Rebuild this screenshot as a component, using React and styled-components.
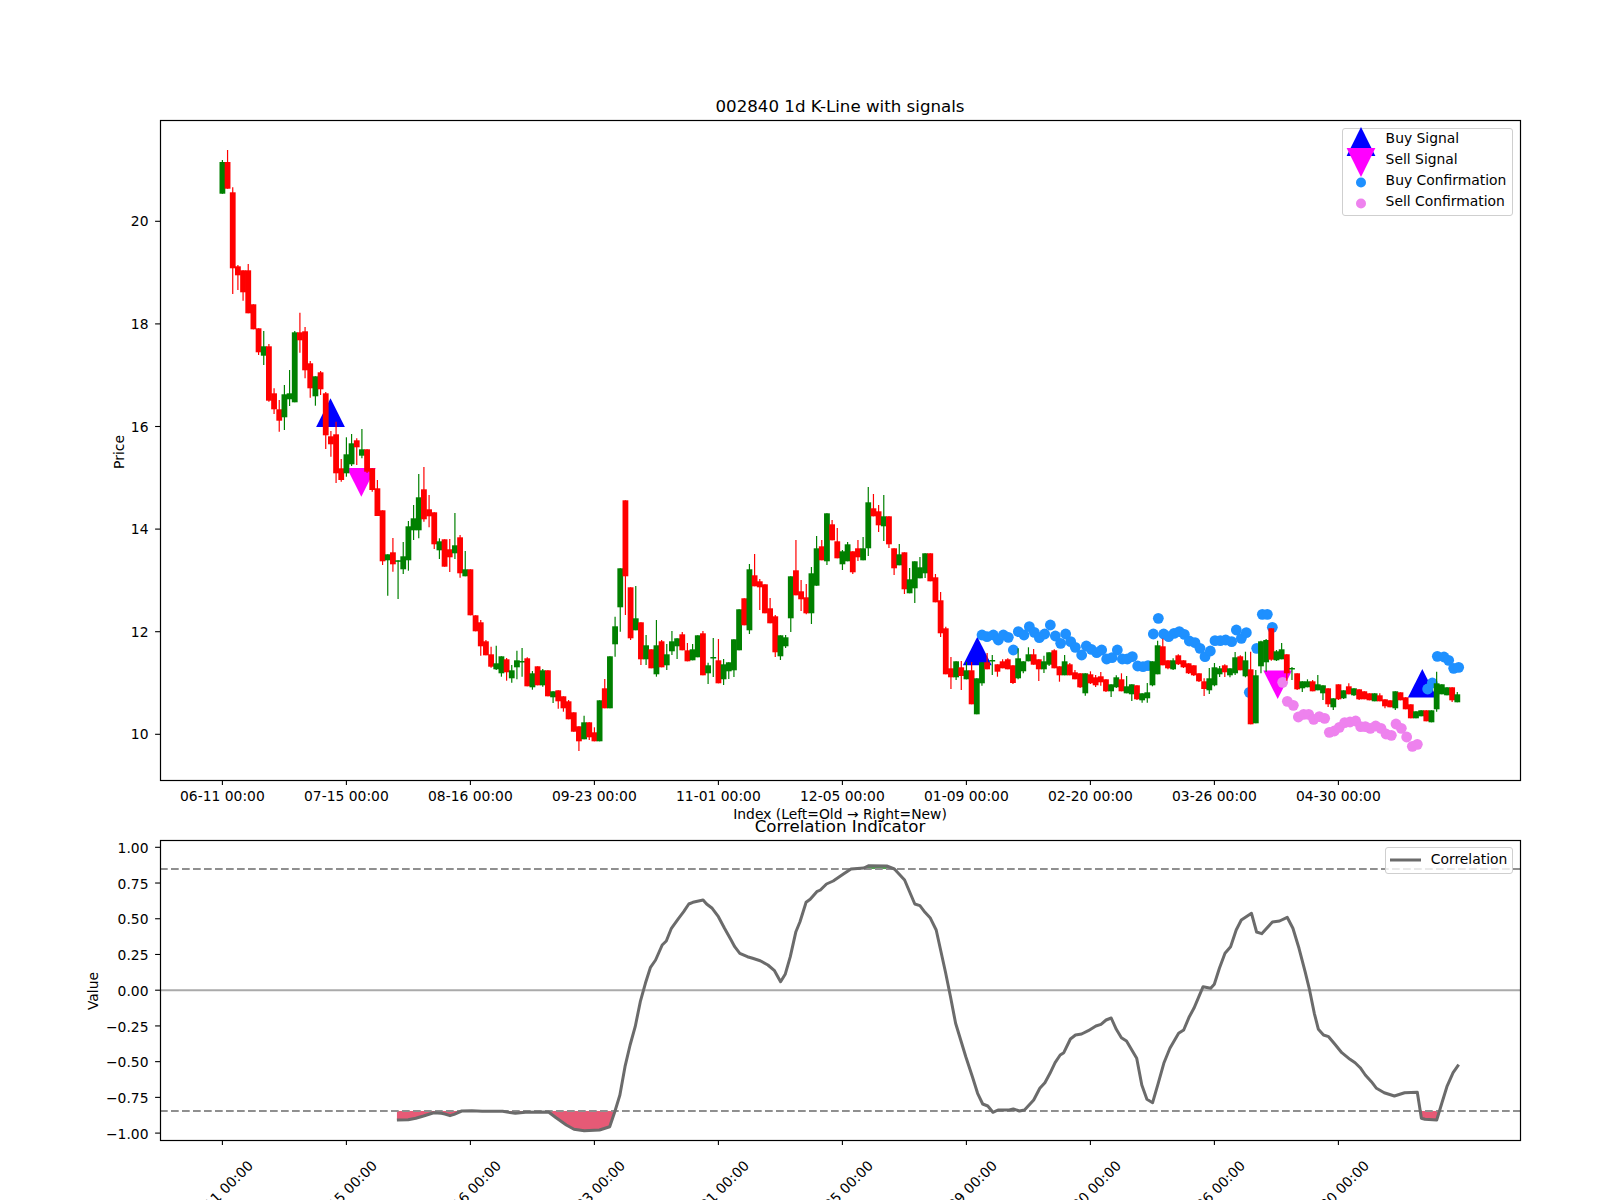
import React from 'react';
import styled, { createGlobalStyle } from 'styled-components';

const GlobalStyle = createGlobalStyle`
  html, body { margin: 0; padding: 0; background: #fff; }
`;

const Figure = styled.div`
  width: 1600px;
  height: 1200px;
  background: #fff;
  overflow: hidden;
  display: flex;
  flex-direction: column;
  font-family: "DejaVu Sans", sans-serif;
`;

const Panel = styled.section`
  position: relative;
  height: ${p => p.$height}px;
  flex: none;
`;

const Plot = styled.svg`
  display: block;
  width: 1600px;
  height: 100%;
  overflow: visible;
`;

const Frame = styled.rect`
  fill: none;
  stroke: #000;
  stroke-width: 1.2;
`;

const Tick = styled.line`
  stroke: #000;
  stroke-width: 1.1;
`;

const Label = styled.text`
  font-family: "DejaVu Sans", sans-serif;
  font-size: ${p => p.$size || 13.89}px;
  fill: #000;
  text-anchor: ${p => p.$anchor || 'middle'};
`;

const Guide = styled.line`
  stroke: ${p => (p.$solid ? '#aaaaaa' : '#8f8f8f')};
  stroke-width: 2.1;
  stroke-dasharray: ${p => (p.$solid ? 'none' : '7.7 3.3')};
`;

const CorrLine = styled.polyline`
  fill: none;
  stroke: #6b6b6b;
  stroke-width: 3;
  stroke-linejoin: round;
`;

const Legend = styled.div`
  position: absolute;
  top: ${p => p.$top}px;
  right: 86.7px;
  box-sizing: border-box;
  padding: ${p => p.$pad};
  background: rgba(255, 255, 255, 0.8);
  border: 1px solid #cfcfcf;
  border-radius: 3px;
  display: flex;
  flex-direction: column;
`;

const LegendRow = styled.div`
  height: ${p => p.$h || 21}px;
  display: flex;
  align-items: center;
  gap: ${p => p.$gap || 9}px;
  font-size: 13.89px;
  line-height: 1;
  color: #000;
  white-space: nowrap;
`;

const LegendKey = styled.svg`
  width: 34px;
  height: 21px;
  flex: none;
  overflow: visible;
`;

// traced candles: [up?, bodyTop, bodyBottom, wickTop, wickBottom]
const g = 1, r = 0;
const candles = [
  [g,162,193.7,160,193.7],[r,162,188.7,150,188.7],[r,192.3,268.3,187.3,294],[r,266.3,275.3,265,290],[r,270.3,292.3,270.3,300.7],
  [r,270.3,313.3,264,313.3],[r,304.3,329.3],[r,328.3,352.3,328.3,355],[g,346.3,355.7,331,365],[r,346.3,400.7,344,401.7],
  [r,393.3,409.3,388.3,414],[r,409.3,420.7,400,431.7],[g,394.3,417.3,385,430],[g,393.3,399.3,370,406],[g,332.3,402.3,331,402.3],
  [r,332.3,340.3,312.7,352.7],[r,331.3,370.3,327,378.3],[r,363.3,388.3,361,397.7],[g,376.3,396.3,376.3,405.7],[r,372.3,389.3,371,395],
  [r,393.3,435.3,392,449],[r,436.3,444.3,431,456.7],[r,434.3,473.3,421.7,483],[r,468.3,480,459,481.7],[g,454.3,473.3,437.3,476.7],
  [g,443.3,464.3,434,466],[r,440.3,447.3,438.3,465],[g,449.3,455.7,429,458.3],[r,449.3,471.7,449.3,473],[r,468.3,490,468.3,491.7],
  [r,488.3,516,480,516],[r,510.3,561.3,510.3,565],[g,554.3,560.3,554.3,595.7],[r,552.3,564.3,538,571.7],[g,560.3,561.8,560.3,599],
  [g,556.3,569.3,542,574],[g,526.3,560.3,521,570.7],[g,518.3,530.3,505,540],[g,497.3,530.3,474,538.3],[r,489.3,519.3,467,521.7],
  [r,509.3,516.3,495,527.3],[r,512.3,544.3,512.3,549],[g,541.3,550.3,538.3,559],[r,539.3,566.7],[r,549.3,557.3,539,572],
  [g,545.3,553.3,513,559],[r,537.3,573.3,535,577.7],[g,569.3,576.3,551,576.3],[r,569.3,615.3],[r,615.3,631.3],
  [r,622.3,646.3,620,655.7],[r,641.3,655.3,640,655.3],[r,654.3,666.7,646.7,667.7],[g,663.3,669.3,645.7,670],[g,656.3,673.3,656.3,676.7],
  [r,659.3,672.3,658,680.7],[g,670.3,678.3,665,682.7],[g,660.3,667.3,650.7,679.3],[g,661,662.5,648,676.7],[r,658.3,686.3,657.3,686.3],
  [g,673.3,687.3,671,689.7],[r,666.3,685.3],[g,670.3,685.3,669,686.7],[r,670.3,696.3],[g,691.3,697.3,691.3,703],
  [r,690.3,701.3,690.3,708.7],[r,696.3,708.3,696.3,711.7],[r,701.3,719.3,700,719.3],[r,712.3,731.7],[r,726.3,741.3,726.3,751],
  [g,722.3,739.3,715.7,739.3],[r,722.3,737.3,722.3,740],[r,732.3,741.3,727.3,741.3],[g,700.3,741.3],[r,688.3,708.3,679,708.3],
  [g,656.3,708.3],[g,626.3,644.3,616.7,656.7],[g,568.3,607.3,568.3,631.7],[r,500.3,576.3,500.3,615],[r,587.3,638.3,587.3,640],
  [g,618.3,630.3,586,630.3],[r,622.3,659.3,622.3,665],[g,645.3,659.3,635,665],[r,649.3,668.3],[g,645.3,674.3,620,676.7],
  [r,641.3,667.3,640,667.3],[g,654.3,665.3,644,670],[g,641.3,651.3,631,655],[g,638.3,646.3,638.3,659],[r,634.3,650.3,632,650.3],
  [r,650.3,661.3,643,661.3],[g,649.3,660.3,644,660.3],[g,635.3,657.3],[r,633.3,675.3,631,675.3],[g,665.3,673.3,662.7,684],
  [g,657,658.5,638,677],[r,660.3,683.3,639,683.3],[g,664.3,679.3,659,685],[g,662.3,671.3,662.3,679],[g,639.3,670.3,639.3,677],
  [g,609.3,650.3],[r,598.3,625.3],[g,569.3,630.3,564,634],[r,575.3,586.3,554,586.3],[r,581.3,587.3,579,610],
  [r,584.3,613.3],[r,608.3,623.3,598,623.3],[r,616.3,652.3,615,657],[g,635.3,656.3,635.3,660],[g,637.3,646.3,635,648],
  [g,576.3,618.3,576.3,632],[r,570.3,595.3,540,595.3],[r,591.3,599.3,580,611],[r,597.3,613.3,584,614.3],[g,573.3,613.3,567,624],
  [g,548.3,585.7,536,585.7],[r,546.3,560.3,540,560.3],[g,513.3,561.3,513.3,565],[r,524.3,540.3,520,540.3],[r,541.3,558.3,528,558.3],
  [g,551.3,564.3,550,570],[g,544.3,561.3,542,561.3],[r,551.3,572.3,551.3,574],[r,548.3,557.3,540,561],[g,548.3,560.3,537,560.3],
  [g,502.3,548.3,487,556],[r,508.3,516.3,494,516.3],[r,511.3,525.3,505,532],[g,516.3,526.3,495,541],[r,516.3,544.3,516.3,548],
  [r,548.3,568.3,548.3,575],[g,554.3,565.3,544,565.3],[r,552.3,589.3,552.3,594],[g,579.3,593.3,568,593.3],[g,561.3,588.3,561.3,603],
  [g,567.3,578.3,557,578.3],[g,553.3,573.3,553.3,578],[r,553.3,581.3],[r,577.3,602.3,574,602.3],[r,600.3,633.3,592,637],
  [r,628.3,674.3,626.7,674.3],[r,668.3,677.3,657,689],[g,661.3,677.3,661.3,680],[r,667.3,676,661,690],[g,670.3,679.3,662,679.3],
  [r,670.3,704.3,662,704.3],[g,678.3,714.3],[g,662.3,683.3,662.3,685.7],[r,662.3,669.3,653,669.3],[g,660,661.5,655,675],
  [r,664.3,671.7,664.3,676.7],[r,661.3,668.3,659.3,668.3],[r,659.3,669.3,658.3,669.3],[r,665.3,683,665.3,684],[g,658.3,678.3,648.3,679.3],
  [g,661.3,671.3,661.3,673.3],[g,654.3,661.3,647.3,661.3],[r,654.3,664.7,649,664.7],[r,659.3,669.3,659.3,681],[g,661.3,669.3,655.7,673],
  [g,652.3,664.7,652.3,666],[r,650.3,668.3,649.3,668.3],[r,666.3,675.3,666.3,681.7],[g,661.3,675.3,655,675.3],[r,664.3,675.3,663,675.3],
  [r,672.3,679.3,670,679.3],[r,673.3,687.3,673.3,688],[g,673.3,693.3,673.3,695.7],[r,674.3,683.3,671.3,684],[r,677.3,685.3,675,687],
  [r,676.3,682.3,672,685.7],[r,679.3,691.3,679.3,692],[g,684.3,691.3,684.3,697],[g,677.3,687.3,675.3,688],[r,679.3,691.3,673.3,691.3],
  [g,686.3,693.3,676,693.3],[g,684.3,694.3,684.3,701],[r,685.3,699.3,685.3,700],[g,693.3,700.3,693.3,702.7],[g,692.3,698.3,683,702.7],
  [g,661.3,685.3,661.3,686.3],[g,645.3,674.3,640.7,674.3],[r,646.3,665.3,638.7,665.3],[r,660.3,668.3,660.3,669.3],[g,660.3,669.3,658.3,670],
  [r,655.3,664.3,654.3,665],[r,660.3,667.3,660.3,668],[r,663.3,673.3,663.3,674],[r,665.3,675.3,665.3,676],[r,673.3,681.3,673.3,682],
  [r,681.3,689,678.3,696],[g,678.3,690.3,668,694],[g,667.3,685.3,663,686.3],[g,668.3,674.3,666,677],[r,665.3,672.3,664.3,677],
  [g,668.3,675.3,668.3,677.3],[g,657.3,673.3,652,675],[r,656.3,670.3,655.3,670.3],[g,660.3,676.3,651.7,677.3],[r,669.3,724.3,651.7,724.3],
  [g,675.3,723.3,670,723.3],[g,641.3,666.3,640.7,673.3],[g,640,662.3,639,671.7],[r,628.3,659.7,628.3,660.7],[g,651.3,660.3,650,661],
  [g,649.3,659.3,643,659.3],[r,654.3,673.3,654.3,680.7],[g,668,669.5,667,680],[r,673.3,689.3,673.3,690],[g,681.3,688.3,681.3,692],
  [g,681.3,687.3,679.3,687.3],[r,681.3,691.3,680,691.3],[g,684.3,690.3,675,690.3],[g,685.3,693.3,685.3,700],[r,688.3,704.3,688.3,707],
  [g,698.3,707.3,698.3,710],[r,684.3,699.3,684.3,700],[g,690.3,698.3,690.3,699],[r,686.3,694.3,683.3,694.3],[g,688.3,695.3,688.3,696],
  [r,689.3,699.3,689.3,700],[r,691.3,699.3],[r,693.3,700.3],[g,693.3,701.3],[r,695.3,701.3,693.3,701.3],
  [r,699.3,706.3,699.3,708.3],[r,700.3,707.3],[g,691.3,708.3,691.3,710],[r,692.3,700.3],[r,697.3,709.3],
  [r,704.3,718.3],[g,711.3,718.3],[g,710.3,716.3],[r,710.3,721.3],[g,710.3,722.3],
  [g,683.3,709.3,671.7,711.7],[g,684.3,694.3],[g,687.3,695.3],[r,687.3,700.3,687.3,702],[g,694.3,702.3,692,702.3],
];

const candleX = i => 222.4 + 5.167 * i;

// confirmation dots, traced in two 3x crops of the price panel
const fromA = ([x, y]) => [950 + x / 3, 590 + y / 3];
const fromB = ([x, y]) => [1210 + x / 3, 590 + y / 3];

const buyDots = [
  ...[[96,135],[111,140],[130,135],[145,150],[160,135],[175,142],[190,180],[205,125],[222,135],[238,110],[253,127],[268,143],[284,132],[301,105],[316,138],[332,160],[347,132],[362,155],[376,172],[395,195],[409,168],[424,178],[440,188],[455,180],[470,207],[486,203],[502,180],[517,207],[532,207],[547,200],[563,228],[579,230],[594,227],[610,132],[625,85],[641,132],[656,140],[672,130],[688,125],[703,133],[718,153],[735,158],[750,175],[765,200],[781,183],[795,152],[811,152],[827,150],[845,155],[859,120],[874,145],[889,128]].map(fromA),
  ...[[118,307],[140,175],[157,73],[172,73],[187,112],[653,297],[667,279],[682,199],[702,201],[716,211],[731,235],[746,232]].map(fromB),
];

const sellDots = [[218,277],[232,334],[250,346],[265,381],[281,373],[296,373],[311,388],[328,380],[344,385],[358,427],[373,423],[388,412],[404,398],[420,396],[437,393],[452,410],[466,410],[481,415],[497,408],[513,415],[528,432],[544,436],[558,402],[574,415],[590,441],[607,469],[622,463]].map(fromB);

const buyMarks = [[330.5, 398.3], [977.3, 636.7], [1422.3, 669]];
const sellMarks = [[361.3, 496.7], [1277.7, 699]];

const Triangle = ({ x, tip, down }) => {
  const base = down ? tip - 28.6 : tip + 28.6;
  return <polygon points={`${x},${tip} ${x - 14.4},${base} ${x + 14.4},${base}`} fill={down ? '#ff00ff' : '#0000ff'} />;
};

const corrA = [[778,1140],[800,1139],[815,1135],[830,1128],[850,1118],[865,1120],[872,1122],[882,1127],[890,1123],[905,1113],[925,1112],[945,1114],[985,1114],[1010,1120],[1030,1117],[1075,1116],[1090,1133],[1110,1155],[1125,1168],[1145,1172],[1175,1170],[1195,1160],[1205,1115],[1215,1065],[1225,980],[1235,915],[1245,860],[1255,785],[1265,730],[1275,682],[1285,660],[1298,615],[1306,603],[1316,565],[1330,535],[1340,515],[1350,492],[1358,487],[1378,480],[1385,492],[1396,505],[1408,530],[1420,565],[1433,600],[1440,620],[1450,640],[1465,650],[1475,655],[1490,662],[1505,675],[1518,692],[1530,725],[1539,703],[1549,650],[1560,575]];
const corrB = [[0,545],[12,487],[20,478],[33,455],[40,450],[52,432],[65,423],[85,402],[100,387],[125,384],[135,377],[170,378],[185,387],[205,420],[225,492],[235,497],[245,517],[255,533],[267,570],[285,695],[295,770],[305,850],[315,900],[325,950],[338,1010],[348,1060],[358,1092],[368,1098],[378,1117],[388,1110],[410,1110],[418,1107],[430,1113],[440,1110],[458,1080],[470,1045],[480,1028],[490,1000],[500,968],[510,945],[517,938],[530,897],[540,885],[552,882],[565,872],[580,858],[590,853],[600,840],[610,834],[620,868],[630,893],[640,903],[660,955],[670,1035],[680,1078],[691,1088],[702,1030],[713,970],[725,925],[742,880],[752,870],[763,830],[772,805],[790,740],[805,745],[812,733],[822,685],[833,640],[844,620],[855,570],[865,540],[885,520],[895,576],[905,581],[926,546],[940,543],[955,532],[966,565],[978,625],[990,695],[998,745],[1008,820],[1016,868],[1026,885],[1036,890],[1048,912],[1062,938],[1078,958],[1088,968],[1098,983],[1108,1005],[1120,1025],[1130,1045],[1145,1058],[1165,1068],[1185,1058],[1210,1057],[1218,1135],[1225,1138],[1248,1140],[1258,1090],[1268,1040],[1280,998],[1291,974]];

const corr = [
  ...corrA.map(([x, y]) => [x / 1.96, 740 + y / 3]),
  ...corrB.map(([x, y]) => [800 + x / 1.96, 740 + y / 3]),
];
const corrPoints = corr.map(p => p.map(n => n.toFixed(1)).join(',')).join(' ');

const ticks = ['06-11 00:00', '07-15 00:00', '08-16 00:00', '09-23 00:00', '11-01 00:00', '12-05 00:00', '01-09 00:00', '02-20 00:00', '03-26 00:00', '04-30 00:00'];
const tickX = i => 222.4 + 124 * i;

const priceY = p => 734.3 - 51.3 * (p - 10);
const valueY = v => 990.2 - 142.9 * v;
const UPPER = 869;
const LOWER = 1111;

const Candle = ({ x, c }) => {
  const [up, top, bottom, wickTop = top, wickBottom = bottom] = c;
  const color = up ? '#008000' : '#ff0000';
  return (
    <g>
      <line x1={x} x2={x} y1={wickTop} y2={wickBottom} stroke={color} strokeWidth="1.2" />
      <rect x={x - 2.9} y={top} width="5.8" height={bottom - top} fill={color} />
    </g>
  );
};

const PricePanel = () => (
  <Panel $height={810}>
    <Plot viewBox="0 0 1600 810">
      <Label x="840" y="111.7" $size={16.67}>002840 1d K-Line with signals</Label>
      {buyMarks.map(([x, y]) => <Triangle key={x} x={x} tip={y} />)}
      {sellMarks.map(([x, y]) => <Triangle key={x} x={x} tip={y} down />)}
      {buyDots.map(([x, y], i) => <circle key={i} cx={x} cy={y} r="5.4" fill="#1e90ff" />)}
      {sellDots.map(([x, y], i) => <circle key={i} cx={x} cy={y} r="5.4" fill="#ee82ee" />)}
      {candles.map((c, i) => <Candle key={i} x={candleX(i)} c={c} />)}
      <Frame x="160.5" y="120.5" width="1360" height="660" />
      {[10, 12, 14, 16, 18, 20].map(p => (
        <g key={p}>
          <Tick x1="155.1" x2="160" y1={priceY(p)} y2={priceY(p)} />
          <Label x="148.5" y={priceY(p) + 5} $anchor="end">{p}</Label>
        </g>
      ))}
      {ticks.map((t, i) => (
        <g key={t}>
          <Tick x1={tickX(i)} x2={tickX(i)} y1="780" y2="784.9" />
          <Label x={tickX(i)} y="801">{t}</Label>
        </g>
      ))}
      <Label x="840" y="819">Index (Left=Old → Right=New)</Label>
      <Label transform="translate(124 452) rotate(-90)">Price</Label>
    </Plot>
    <Legend $top={127.7} $pad="0 6px 2px 0">
      <LegendRow>
        <LegendKey viewBox="0 0 34 21"><polygon points="18,-2 3.6,27 32.4,27" fill="#0000ff" /></LegendKey>
        <span>Buy Signal</span>
      </LegendRow>
      <LegendRow>
        <LegendKey viewBox="0 0 34 21"><polygon points="18,27 3.6,-2 32.4,-2" fill="#ff00ff" /></LegendKey>
        <span>Sell Signal</span>
      </LegendRow>
      <LegendRow>
        <LegendKey viewBox="0 0 34 21"><circle cx="18" cy="11.5" r="5" fill="#1e90ff" /></LegendKey>
        <span>Buy Confirmation</span>
      </LegendRow>
      <LegendRow>
        <LegendKey viewBox="0 0 34 21"><circle cx="18" cy="11.5" r="5" fill="#ee82ee" /></LegendKey>
        <span>Sell Confirmation</span>
      </LegendRow>
    </Legend>
  </Panel>
);

const areaPath = threshold =>
  `M${corr.map(p => p.join(' ')).join('L')}L${corr[corr.length - 1][0]} ${threshold}L${corr[0][0]} ${threshold}Z`;

const CorrelationPanel = () => (
  <Panel $height={390}>
    <Plot viewBox="0 810 1600 390">
      <defs>
        <clipPath id="belowLower"><rect x="160" y={LOWER} width="1360" height={1140 - LOWER} /></clipPath>
        <clipPath id="aboveUpper"><rect x="160" y="840" width="1360" height={UPPER - 840} /></clipPath>
      </defs>
      <Label x="840" y="831.7" $size={16.67}>Correlation Indicator</Label>
      <path d={areaPath(LOWER)} fill="#dc143c" fillOpacity="0.7" clipPath="url(#belowLower)" />
      <path d={areaPath(UPPER)} fill="#008000" fillOpacity="0.7" clipPath="url(#aboveUpper)" />
      <Guide x1="160" x2="1520" y1={UPPER} y2={UPPER} />
      <Guide x1="160" x2="1520" y1={LOWER} y2={LOWER} />
      <Guide $solid x1="160" x2="1520" y1={valueY(0)} y2={valueY(0)} />
      <CorrLine points={corrPoints} />
      <Frame x="160.5" y="840.5" width="1360" height="300" />
      {[1, 0.75, 0.5, 0.25, 0, -0.25, -0.5, -0.75, -1].map(v => (
        <g key={v}>
          <Tick x1="155.1" x2="160" y1={valueY(v)} y2={valueY(v)} />
          <Label x="148.5" y={valueY(v) + 5.6} $anchor="end">{`${v < 0 ? '\u2212' : ''}${Math.abs(v).toFixed(2)}`}</Label>
        </g>
      ))}
      {ticks.map((t, i) => (
        <g key={t}>
          <Tick x1={tickX(i)} x2={tickX(i)} y1="1140" y2="1144.9" />
          <Label transform={`translate(${tickX(i) - 2} 1193) rotate(-45)`} y="5">{t}</Label>
        </g>
      ))}
      <Label transform="translate(98 991) rotate(-90)">Value</Label>
    </Plot>
    <Legend $top={37.3} $pad="1px 5px 2px 4px">
      <LegendRow $h={21.5} $gap={10}>
        <svg width="31" height="4" style={{ flex: 'none' }}><line x1="0" x2="31" y1="2" y2="2" stroke="#6b6b6b" strokeWidth="3" /></svg>
        <span>Correlation</span>
      </LegendRow>
    </Legend>
  </Panel>
);

const App = () => (
  <>
    <GlobalStyle />
    <Figure>
      <PricePanel />
      <CorrelationPanel />
    </Figure>
  </>
);

export default App;
